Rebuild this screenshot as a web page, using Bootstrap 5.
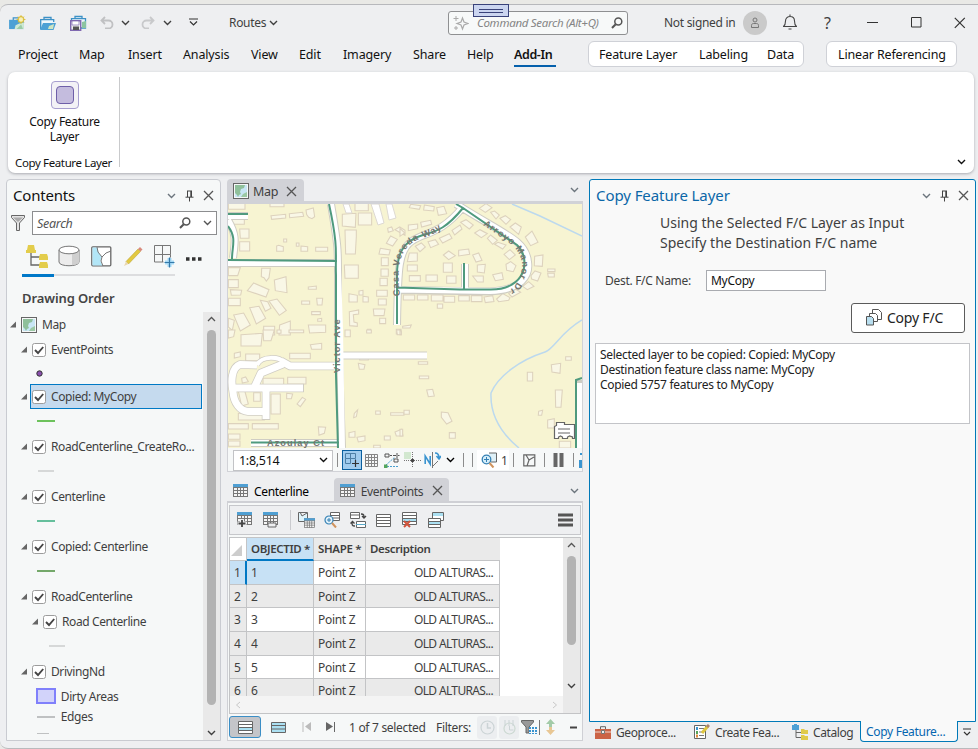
<!DOCTYPE html>
<html lang="en">
<head>
<meta charset="utf-8">
<title>Routes</title>
<link href="https://cdn.jsdelivr.net/npm/bootstrap@5.3.0/dist/css/bootstrap.min.css" rel="stylesheet">
<style>
body{width:978px;height:749px;overflow:hidden;background:#e9e9e6;font-family:"Noto Sans","Open Sans",sans-serif;font-size:12px;line-height:15px;color:#3f3f3f;letter-spacing:-.3px;white-space:nowrap}
svg{display:block;flex:none}
.app-window{height:745px;background:#eeeff1;border-top:1px solid #b7b8bc;border-bottom:1px solid #b9babd;border-radius:8px 0 0 8px;margin-top:4px}
.title-row{height:35px;display:grid;align-items:center;grid-template-columns:31px 30px 30px 21px 20px 22px 26px 40px 40px 179px 216px 79px 40px 41px 43px 44px 43px auto;padding-left:9px}
.cmd-search{width:180px;height:24px;background:#f7f9f9;border:1px solid #8f9092;border-radius:3px;color:#858585;font-style:italic;font-size:11.5px}
.cmd-search span{margin-top:-1px}
.drag-tab{position:absolute;left:473px;top:4px;width:36px;height:13px;background:#cbd5f0;border:1px solid #39427a}
.drag-tab i{display:block;width:24px;height:4px;margin:3.5px auto;border-top:1px solid #39427a;border-bottom:1px solid #39427a}
.avatar{width:24px;height:24px;background:#cacaca}
.menu-row{height:32px;display:grid;align-items:center;grid-template-columns:61px 49px 55px 68px 48px 44px 70px 54px 47px 74px 238px auto;padding:0 0 3px 18px;font-size:12.5px;color:#111;letter-spacing:-.15px}
.menu-row .menu-on{font-weight:600;height:22px;margin-top:2px;padding-top:2px;border-bottom:2px solid #0560ac;width:42px;letter-spacing:-.4px}
.ctx{height:26px;border:1px solid #cfd1d7;border-radius:6px;background:#fff;margin-top:-1px}
.ctx-a{width:216px;display:grid;grid-template-columns:100px 68px auto;align-items:center;padding-left:10px}
.ctx-b{width:131px;padding-left:11px}
.ribbon{height:101px;margin:0 4px 0 8px;background:#fff;border-radius:7px;box-shadow:0 1px 3px #a9abb0;color:#111}
.ribbon-group{width:112px;height:90px;margin-top:5px;border-right:1px solid #c9cacc;padding:4px 0 0 2px}
.ribbon-btn{width:28px;height:28px;border:1px solid #a79fcf;border-radius:4px;background:#f3f2f6;padding:4px}
.ribbon-btn i{display:block;width:18px;height:18px;border:1px solid #6e5fa8;border-radius:4px;background:#c4bcde}
.ribbon-cap{margin:5px 0 0}
.group-cap{font-size:11.5px;letter-spacing:-.37px;margin:auto 2px -3px 0}
.work{margin:6px 0 0 6px;height:562px;display:grid;gap:6px;grid-template-columns:215px 356px 387px;align-items:start}
.contents{height:562px;background:#f6f8f8;border:1px solid #c9cbd1;border-radius:4px 4px 0 0}
.pane-head{height:31px;font-size:15px;color:#111;letter-spacing:-.2px;display:grid;align-items:center}
.ch{grid-template-columns:154px 18px 18px auto;padding-left:6px}
.search-box{height:24px;width:185px;background:#fff;border:1px solid #8c8d8f;font-style:italic;color:#555;font-size:12.5px;margin-right:3px}
.view-icons{display:grid;grid-template-columns:32px 33px 32px 31px 32px auto;padding-left:19px;height:30px;align-items:center;margin-top:6px}
.view-line{margin-left:15px;width:153px;height:2px;background:#dcdddf;margin-top:3px}
.view-line i{display:block;width:32px;height:3px;background:#0078c8}
.order{font-size:13px;font-weight:600;letter-spacing:-.1px;padding:15px 0 0 15px;height:36px;color:#444}
.tree-wrap{height:428px;overflow:hidden}
.tree{width:196px;font-size:12px;letter-spacing:-.4px}
.tree>div{height:25px;display:flex;align-items:center;padding-left:13px}
.tree>.top-node{padding-left:2px}
.tree>.pad2{padding-left:24px}
.tree svg.arr{width:8px;height:7px;margin:0 4px 0 0}
.tree .nm{margin-left:5px}
.tree>.selrow svg.arr{margin-right:2px}
.tree .sel{background:#c5daee;box-shadow:inset 0 0 0 1px #0079c5;padding-left:2px;width:172px;height:25px;display:flex;align-items:center}
.tree>.sym{padding:0 0 2px 30px}
.tree>.pt-sym{height:22px;padding:0 0 0 29px}
.tree>.area-row{height:24px;padding-left:29px}
.tree>.edge-row{height:17px;padding:0 0 0 30px}
.tree>.sub-sym{padding:0 0 2px 42px}
.ln{display:block;width:18px;height:2px}
.ln-short{width:16px;margin-left:1px}
.ln-cut{width:12px;height:1px}
.s1{background:#6dc25c}.s2{background:#d6d8d8}.s3{background:#65bf9c}.s4{background:#74a86a}.s5{background:#bfc1c2}
.vscroll{background:#e9e9e9;width:17px}
.thumb{display:block;background:#b3b3b3;border-radius:5px;width:9px;margin:0 4px}
.th-tree{height:375px}.th-tbl{height:89px}
.mid{width:356px}
.tab-on{background:#d1d2d7;border-radius:4px 4px 0 0}
.map-tab{width:77px;height:22px;padding:2px 0 0 6px;font-size:12.5px}
.map-panel{border:1px solid #d1d2d7;border-top:3px solid #d1d2d7;height:271px;background:#f6f8f8;overflow:hidden}
.map-bar{height:24px;padding-left:5px}
.scale-box{width:100px;height:21px;background:#fff;border:1px solid #c2c3c6;color:#111;padding:0 4px 0 5px;font-size:12.5px;flex:none}
.tb-sep{width:1px;height:14px;background:#8c8c8c}
.map-tools{display:grid;flex:none;grid-template-columns:5px 23px 19px 20px 20px 22px 17px 9px 5px 36px 10px 21px 9px 20px 6px 3px;align-items:center;padding-left:4px}
.snap{width:20px;height:20px;background:#a0ccee;border:1px solid #0a5f9e}
.zoom-chip{width:32px;height:20px;background:#fff}
.tbl-tabs{margin-top:6px;height:23px;padding-left:6px}
.tab-c{margin-left:6px;letter-spacing:-.35px;padding-top:3px}
.tbl-tabs svg{margin-top:2px}
.tbl-tabs .tab-on{width:115px;padding-left:6px;height:23px;margin-left:25px}
.tbl-tabs .tab-on span{margin-left:6px;margin-right:9px;letter-spacing:-.35px;padding-top:3px}
.tbl-panel{border:1px solid #cfd0d5;border-top:2px solid #cfd0d5;height:240px;background:#f6f8f8;padding:2px 1px 0}
.tbl-tools{height:30px;border:1px solid #c6c7cb;background:#eeeff1;display:grid;align-items:center;grid-template-columns:26px 27px 8px 26px 26px 26px 26px 26px 130px auto;padding-left:7px}
.tool-sep{width:1px;height:20px;background:#cacbcf}
.grid-box{border:1px solid #c3c4c6;margin-top:2px;height:177px;background:#fff;overflow:hidden}
.attr{display:grid;grid-template-columns:17px 67px 52px 134px;grid-template-rows:23px 24px 23px 24px 24px 23px 24px;height:158px;overflow:hidden;width:270px}
.attr>div{border-right:1px solid #c3c4c6;border-bottom:1px solid #c3c4c6;padding:4px 4px 0;overflow:hidden}
.attr .alt,.attr .hd{background:#eaeaea}
.attr .hd{font-weight:600;font-size:11.5px;letter-spacing:-.35px;padding-top:3px}
.attr .rn{background:#eaeaea}
.attr .blue{background:#c7e1f5}
.attr .hblue{background:#c7e1f5;border-bottom:2px solid #0078c4}
.attr .rblue{background:#c7e1f5;border-right:2px solid #0078c4}
.attr .ds{padding-left:48px;letter-spacing:-.65px}
.hscroll{height:17px;background:#f4f4f4;width:333px;padding:0 5px}
.tbl-foot{height:26px;display:grid;align-items:center;grid-template-columns:42px 31px 23px 24px 87px 41px 22px 22px 25px 24px auto}
.foot-on{width:32px;height:22px;background:#c4c5c9;border:1px solid #3a8ec6;border-radius:3px}
.dim{background:#eceef0;width:20px;height:23px;border-radius:3px;display:flex;align-items:center;justify-content:center}
.right-pane{width:387px;height:543px;background:#f9f9f9;border:1px solid #0079b8;border-radius:3px 3px 0 0}
.rh{grid-template-columns:326px 18px 18px auto;padding-left:6px;color:#0b67a8;letter-spacing:-.08px}
.intro{font-size:14px;line-height:20px;letter-spacing:0;padding:2px 0 0 70px}
.name-input{width:120px;height:21px;border:1px solid #a9abb0;background:#fff;color:#111;padding:2px 4px}
.dest{display:grid;grid-template-columns:101px auto;padding-left:15px;align-items:center;margin-top:17px}
.copy-btn{width:114px;height:30px;border:1px solid #5b5b5b;border-radius:3px;background:#fff;margin:12px 0 0 261px;font-size:14px;color:#222;letter-spacing:-.2px;padding:0 7px 1px 0}
.log{margin:10px 0 0 5px;width:375px;height:81px;border:1px solid #c3c4c8;background:#fff;padding:3px 4px;color:#222;letter-spacing:-.31px}
.dock{display:grid;grid-template-columns:99px 98px 67px 100px auto;padding-left:6px;height:20px;letter-spacing:-.4px}
.dock>div{display:flex;align-items:center;gap:5px}
.dock .dock-on{border:1px solid #0079b8;border-top:0;border-radius:0 0 4px 4px;background:#f9f9f9;color:#0566b0;margin:-1px 0 0 1px;width:98px;padding-left:5px;height:21px;letter-spacing:-.3px}
.bl path{fill:#f9f7e6;stroke:#ddd2bd;stroke-width:3.2}
.rd{fill:none;stroke:#fff}
.rc{fill:none;stroke:#cfcdc4}
.gr{fill:none;stroke:#4f9a7e;stroke-width:2}
.wt{fill:none;stroke:#bcd9ee;stroke-width:1.5}
.st{font:700 9.2px "Liberation Sans",sans-serif;fill:#75756e;letter-spacing:1px}
</style>
<script src="https://cdn.jsdelivr.net/npm/bootstrap@5.3.0/dist/js/bootstrap.bundle.min.js"></script>
</head>
<body>
<svg width="0" height="0" class="position-absolute">
<defs>
<symbol id="chev" viewBox="0 0 9 6"><path d="M1 1l3.500 3.500L8 1" fill="none" stroke="currentColor" stroke-width="1.400"/></symbol>
<symbol id="pin" viewBox="0 0 9 12"><path d="M2.500 1v6M6.500 1v6M2 1h5M.5 7.200h8M4.500 7v4.500M5.800 1v6" fill="none" stroke="#444" stroke-width="1"/></symbol>
<symbol id="xx" viewBox="0 0 11 11"><path d="M1 1l9 9M10 1l-9 9" fill="none" stroke="#555" stroke-width="1.300"/></symbol>
<symbol id="mag" viewBox="0 0 12 12"><circle cx="7.300" cy="4.500" r="3.500" fill="none" stroke="#555" stroke-width="1.500"/><path d="M4.700 7.200L1 11" stroke="#555" stroke-width="2"/></symbol>
<symbol id="chk" viewBox="0 0 14 14"><rect x=".5" y=".5" width="13" height="13" rx="2" fill="#fff" stroke="#9c9c9c"/><path d="M3 7l3 3 5.200-6" fill="none" stroke="#444" stroke-width="1.900"/></symbol>
<symbol id="arr" viewBox="0 0 8 7"><path d="M7 .500v6H1z" fill="#666"/></symbol>
<symbol id="mapi" viewBox="0 0 16 16"><rect x=".5" y=".5" width="15" height="15" fill="#f6f8f8" stroke="#666"/><rect x="2" y="2" width="12" height="12" fill="#c8e6f5"/><path d="M2 2h10l-1 3-3 1-1 3 1 2-2 1-1 2-1-2-2-2z" fill="#8fc09b"/><path d="M14 9v5H8l2-3z" fill="#9cc9a5"/></symbol>
<symbol id="tbl" viewBox="0 0 15 13"><rect x=".5" y=".5" width="14" height="12" fill="#f5f5f5" stroke="#777"/><rect x="0" y="0" width="15" height="3.500" fill="#4f9fd3"/><path d="M0 3.500h15M0 6.500h15M0 9.500h15M4.500 4v9M7.500 4v9M10.500 4v9" stroke="#777"/></symbol>
<symbol id="rows" viewBox="0 0 15 13"><path d="M.5.500h14v12H.5zM0 3.500h15M0 6.500h15M0 9.500h15" fill="#fff" stroke="#666"/></symbol>
<symbol id="brief" viewBox="0 0 16 14"><path d="M4.500 4V1h7v3" fill="none" stroke="#3d91c6" stroke-width="1.300"/><path d="M0 3h16v10H0z" fill="#4ca0d5"/><path d="M6 13l1-4 4-2 5-1v7z" fill="#cfe9d4"/><path d="M8 13l5-5 2 5z" fill="#9bcba6"/></symbol>
</defs></svg>

<main class="app-window">
<header class="title-row">
 <svg width="17" height="16"><use href="#brief" x="0" y="2" width="15" height="13"/><circle cx="12" cy="4.500" r="3" fill="#f6ecae" stroke="#d9bb35"/><path d="M12 0v9M7.500 4.500h9M9 1.500l6 6M15 1.500l-6 6" stroke="#d9bb35" stroke-width=".8"/><circle cx="12" cy="4.500" r="2" fill="#f8f0b8"/></svg>
 <svg width="16" height="14"><path d="M4 4V1.500h7V4" fill="none" stroke="#3d91c6" stroke-width="1.300"/><path d="M.7 13V3.700h13V6" fill="#eef6fb" stroke="#3d91c6" stroke-width="1.300"/><path d="M0 14l3-7h13l-2.500 7z" fill="#4ca0d5"/><path d="M8 13l1-3 5-2-1 5z" fill="#cfe5c2"/></svg>
 <svg width="17" height="16"><path d="M5 4V1.500h7V4M1.500 6V3.700h14V13H11" fill="#eef6fb" stroke="#3d91c6" stroke-width="1.300"/><path d="M12 13V7l4-1v7z" fill="#8cc4a0"/><path d="M.7 5.700h10v9.600h-10z" fill="#eee" stroke="#8069b1" stroke-width="1.400"/><path d="M2 6h7v4H2z" fill="#fff" stroke="#8069b1" stroke-width=".7"/><path d="M3 11.500h6V15H3z" fill="#555"/></svg>
 <svg width="14" height="13"><path d="M5 1L1.500 4.500 5 8M1.500 4.500H8.500a4 4 0 0 1 0 8H5" fill="none" stroke="#c0c1c3" stroke-width="1.800"/></svg>
 <svg width="9" height="6"><use href="#chev"/></svg>
 <svg width="14" height="13"><path d="M9 1l3.500 3.500L9 8M12.500 4.500H5.500a4 4 0 0 0 0 8H8" fill="none" stroke="#c8c9cb" stroke-width="1.800"/></svg>
 <svg width="9" height="6"><use href="#chev"/></svg>
 <svg width="9" height="9"><path d="M0 1h9M1 3.500L4.500 7 8 3.500" fill="none" stroke="#333" stroke-width="1.200"/></svg>
 <span>Routes</span>
 <svg width="9" height="6"><use href="#chev"/></svg>
 <div class="cmd-search d-flex align-items-center"><svg width="16" height="16" class="ms-1 me-2" viewBox="0 0 16 16"><path d="M9.500 3l1.500 4 4 1.500-4 1.500-1.500 4L8 10 4 8.500 8 7z" fill="none" stroke="#aaa" stroke-width="1.200"/><path d="M3 1v5M.5 3.500h5M3 11v4M1 13h4" stroke="#aaa"/></svg><span class="flex-fill">Command Search (Alt+Q)</span><svg width="12" height="12" class="me-1 pe-0"><use href="#mag"/></svg></div>
 <span>Not signed in</span>
 <span class="avatar rounded-circle d-flex justify-content-center align-items-center"><svg width="10" height="12"><circle cx="5" cy="3" r="2" fill="none" stroke="#777"/><path d="M1.500 10.500V8.500c0-1.500 1-2 2-2h3c1 0 2 .5 2 2v2z" fill="none" stroke="#777"/></svg></span>
 <svg width="14" height="17"><path d="M.5 12.500C2.500 11 2.500 9.500 2.500 7c0-6 9-6 9 0 0 2.500 0 4 2 5.500zM5.500 15h3M7 .500v2" fill="none" stroke="#444" stroke-width="1.100"/></svg>
 <span class="fs-6 lh-1">?</span>
 <svg width="11" height="2"><path d="M0 .500h11" stroke="#333"/></svg>
 <svg width="11" height="11"><path d="M.5.500h9.500v9.500H.5z" fill="none" stroke="#333"/></svg>
 <svg width="12" height="12"><path d="M.8.800l10 10M10.800.800l-10 10" stroke="#333" stroke-width="1.200"/></svg>
</header>
<div class="drag-tab"><i></i></div>
<nav class="menu-row">
 <span>Project</span><span>Map</span><span>Insert</span><span>Analysis</span><span>View</span><span>Edit</span><span>Imagery</span><span>Share</span><span>Help</span><span class="menu-on">Add-In</span>
 <div class="ctx ctx-a"><span>Feature Layer</span><span>Labeling</span><span>Data</span></div>
 <div class="ctx ctx-b d-flex align-items-center">Linear Referencing</div>
</nav>
<section class="ribbon d-flex justify-content-between">
 <div class="ribbon-group text-center d-flex flex-column align-items-center"><span class="ribbon-btn"><i></i></span><span class="ribbon-cap">Copy Feature<br>Layer</span><span class="group-cap">Copy Feature Layer</span></div>
 <svg width="9" height="6" class="align-self-end mb-2 me-2 pb-0"><use href="#chev"/></svg>
</section>

<div class="work">
<aside class="contents">
 <div class="pane-head ch"><span>Contents</span><svg width="9" height="6" class="text-secondary"><use href="#chev"/></svg><svg width="9" height="12"><use href="#pin"/></svg><svg width="11" height="11"><use href="#xx"/></svg></div>
 <div class="d-flex align-items-center ps-1"><svg width="14" height="16" viewBox="0 0 14 16"><path d="M.5.500h13v2L8.500 8v7.500h-3V8L.5 2.500z" fill="#e3e3e3" stroke="#666"/><path d="M2 2.500h10L7 7z" fill="#aaa"/></svg>
 <div class="search-box d-flex align-items-center ms-auto"><span class="flex-fill ps-1">Search</span><svg width="12" height="12" class="me-2"><use href="#mag"/></svg><svg width="9" height="6" class="mx-1"><use href="#chev"/></svg></div></div>
 <div class="view-icons">
  <svg width="23" height="23"><path d="M5 8v12h9M5 12h9" fill="none" stroke="#666" stroke-width="1.300"/><g fill="#e3cd4c"><path d="M2 0h6l1 5H1zM0 5h10v3H0zM14 9h7l1 3v3H13v-3zM14 17h7l1 3v3H13v-3z"/></g></svg>
  <svg width="22" height="22"><path d="M1 5v12c0 5 20 5 20 0V5" fill="#ececec" stroke="#777"/><path d="M14 8v12c4 0 7-1 7-3V5z" fill="#cfcfcf"/><ellipse cx="11" cy="5" rx="10" ry="3.800" fill="#fff" stroke="#777"/></svg>
  <svg width="21" height="21"><rect x=".8" y=".8" width="19" height="19" rx="1" fill="#fff" stroke="#666" stroke-width="1.300"/><path d="M1.500 1.500h5l1 5 3 4-1 5 2 4H1.500z" fill="#b2e6f7"/><path d="M6 1l1 5 4 5-1 4 2 5M11 11l4-4 5-2" fill="none" stroke="#777"/></svg>
  <svg width="20" height="21"><path d="M3 15.500L15 3l2.500 2.500L5.500 18z" fill="#e2c941" stroke="#b59d28" stroke-width=".5"/><path d="M15 3l2-2 2.500 2.500-2 2z" fill="#d98b7e"/><path d="M3 15.500L1 20l4.500-2z" fill="#ead8b0"/></svg>
  <svg width="21" height="23"><path d="M.5.500h16v9H.5zM8.500.500V17M.5 9.500V17h9M16.500 9.500v3" fill="none" stroke="#777"/><path d="M15.500 13v9M11 17.500h9" stroke="#a5d9f5" stroke-width="4"/><path d="M15.500 12.500v10M10.500 17.500h10" stroke="#3478a8" stroke-width="1.200"/></svg>
  <svg width="16" height="10"><path d="M0 8h3.500M6 8h3.500M12 8h3.500" stroke="#333" stroke-width="3.500"/></svg>
 </div>
 <div class="view-line"><i></i></div>
 <div class="order">Drawing Order</div>
 <div class="tree-wrap d-flex">
 <div class="tree">
  <div class="top-node"><svg class="arr"><use href="#arr"/></svg><svg width="16" height="16"><use href="#mapi"/></svg><span class="nm">Map</span></div>
  <div><svg class="arr"><use href="#arr"/></svg><svg width="14" height="14"><use href="#chk"/></svg><span class="nm">EventPoints</span></div>
  <div class="pt-sym"><svg width="7" height="7"><circle cx="3.500" cy="3.500" r="2.700" fill="#8a50ad" stroke="#333"/></svg></div>
  <div class="selrow"><svg class="arr"><use href="#arr"/></svg><span class="sel"><svg width="14" height="14"><use href="#chk"/></svg><span class="nm">Copied: MyCopy</span></span></div>
  <div class="sym"><i class="ln s1"></i></div>
  <div><svg class="arr"><use href="#arr"/></svg><svg width="14" height="14"><use href="#chk"/></svg><span class="nm">RoadCenterline_CreateRo...</span></div>
  <div class="sym"><i class="ln ln-short s2"></i></div>
  <div><svg class="arr"><use href="#arr"/></svg><svg width="14" height="14"><use href="#chk"/></svg><span class="nm">Centerline</span></div>
  <div class="sym"><i class="ln s3"></i></div>
  <div><svg class="arr"><use href="#arr"/></svg><svg width="14" height="14"><use href="#chk"/></svg><span class="nm">Copied: Centerline</span></div>
  <div class="sym"><i class="ln s4"></i></div>
  <div><svg class="arr"><use href="#arr"/></svg><svg width="14" height="14"><use href="#chk"/></svg><span class="nm">RoadCenterline</span></div>
  <div class="pad2"><svg class="arr"><use href="#arr"/></svg><svg width="14" height="14"><use href="#chk"/></svg><span class="nm">Road Centerline</span></div>
  <div class="sub-sym"><i class="ln ln-short s2 ms-0"></i></div>
  <div><svg class="arr"><use href="#arr"/></svg><svg width="14" height="14"><use href="#chk"/></svg><span class="nm">DrivingNd</span></div>
  <div class="area-row"><svg width="20" height="16"><rect x="1" y="1" width="18" height="14" fill="#d2d3fa" stroke="#8080fb" stroke-width="2"/></svg><span class="nm ps-0 ms-1">&#8202;Dirty Areas</span></div>
  <div class="sym edge-row"><i class="ln s5"></i><span class="nm ps-0">&#8202;Edges</span></div>
  <div class="sym edge-row"><i class="ln ln-cut s5"></i></div>
 </div>
 <div class="vscroll d-flex flex-column"><svg width="9" height="6" class="mx-auto my-1"><path d="M1 5l3.500-3.500L8 5" fill="none" stroke="#555" stroke-width="1.300"/></svg><i class="thumb th-tree mt-1"></i><svg width="9" height="6" class="mx-auto mt-auto mb-1"><use href="#chev"/></svg></div>
 </div>
</aside>

<section class="mid">
 <div class="d-flex justify-content-between align-items-center"><div class="tab-on map-tab d-flex align-items-center"><svg width="16" height="16" class="me-1"><use href="#mapi"/></svg><span>Map</span><svg width="11" height="11" class="ms-2"><use href="#xx"/></svg></div><svg width="9" height="6" class="me-1 text-secondary"><use href="#chev"/></svg></div>
 <div class="map-panel">
 <svg width="354" height="244" viewBox="228 204 354 244">
 <rect x="228" y="204" width="354" height="244" fill="#f7f4d2"/>
 <g class="wt"><path d="M512 204L540 216 582 236"/><path d="M582 320C560 333 554 349 545 352C520 360 498 376 491 393C490 416 502 434 519 448"/></g>
 <g class="bl">
 <g transform="translate(225 175) scale(.3333)">
 <path d="M10 85h50v18H10zM20 130h38v18H20zM135 85h42v10h-42zM138 122l44-4v11l-42 4zM193 116l40-4 3 12-42 4zM243 105l22-6 4 26-8 6-10-4-6-8zM44 162h28v28H46zM44 200h30v28H44zM155 213l6-2 14 4v14h-20zM228 213l20 2v14h-20zM214 204h8v10h-8zM176 192h9v9h-9zM272 217h36v12h-36zM10 278h36l-8 24H10zM10 314h30v24H10zM16 344l34 2-3 14-28 1zM10 370h36v22H10zM110 280h26l-4 28-8 10-7-10-8-3zM86 324l46 20-9 22-56-19zM148 315l35-10 3 48-35-6zM74 398l28-4 20 36-28 17zM106 376l22 4 10 20-17 9zM132 378l24-6 28 34-21 15zM26 420l30-6 20 36-30 18zM10 430l18 6-6 30-12-10zM164 450l32-12v42h-34zM116 454h33v26h-33zM250 450h52v22l-48 2zM250 336l24-3v10h-24zM275 370h18l-2 20h-14zM230 378h24v10h-24zM260 410h26v9h-26zM278 432l12-2v9h-12z"/>
 <path d="M352 118l41-3-2 42-39-4zM400 114h40v36h-40zM390 85h40v22h-40zM360 165h34v20l-3 52h-29zM358 270h42v40h-40zM372 356l25 5v20h-25zM402 348l12-2v14h-12zM414 364l16 2v15h-16zM373 410l28-5v12l-16 2 2 22 10 3v10l-23-2zM428 463h9v9h-9zM488 160l12-4 5 11-15 5zM510 164l14-8 16 10v15zM484 205l13-22 20 10-14 20zM466 220l30 5-4 15-30-3zM469 248h21v24h-21zM468 282h22v22h-22zM465 310h22v22h-22zM455 346h32v18h-32zM460 372h24v18h-24zM445 402h35l-3 20h-30zM464 430h18v16h-18zM514 463h14v14h-14z"/>
 </g>
 <g transform="translate(400 175) scale(.3333)">
 <path d="M32 88l30 4-4 11-30-5zM73 90l30 5-2 13-30-3zM110 98l22-4 8 22-25 5zM62 142l30-6 3 12-30 8zM25 150l28-3v14l-28 6zM0 160l14 14-14 10zM156 166l24-16 6 12-22 18zM118 190l30-14 8 14-28 14zM182 142l16-8 22 16-12 12zM46 214l18-10 12 12-16 14zM84 200l22-6 10 14-24 10zM28 234h24v24l-30 2zM130 240l16-12 20 14-20 12zM176 226l30-4 3 16-33 5zM218 240l18-6 10 22-18 5zM130 264h27v28h-27zM232 270l24-2-3 26-21-3zM22 270h30v18H22zM28 302h33v17H28zM78 300h34v19H78zM140 303h28v22h-28zM218 303h32v18h-18zM278 299l28-6 4 20-24 4zM318 268l14-8 16 12-8 18-20-4zM312 238l18-14 16 16-18 14zM224 174l16-10 22 12-18 12zM262 190l10-10 20 16-14 12zM284 208l10-6 24 8-10 12zM238 100l20-14 18 12-20 14zM272 112l12-4 14 12-10 12zM300 130l16-8 16 12-14 14zM330 156l16-12 18 12-8 22zM376 186l20-18 18 34-22 10zM404 244l25-4-2 34-24-2zM393 302l12-14 18 6-10 24-18-6zM368 334l18-14 16 14-20 10zM326 356l20-14 16 10-26 14zM290 372l18-16 22 12-4 8-30 4zM443 282h22v8h-22zM443 295h20v11h-18zM10 360h34v15H10zM52 360h32v15H52zM94 360h35v18H94zM132 364h32v18h-32zM176 362h32v16h-32zM214 362h32v18h-32zM252 366l26-4 4 18-26 3zM112 387h16v13h-16zM8 454l26-4-4 9H8z"/>
 </g>
 <g transform="translate(225 330) scale(.3333)">
 <path d="M10 0h20l-4 20-16 4zM48 14l64-4-4 38H48zM114 0h34l-10 32h-22zM156 0h12v10h-12zM192 0h44v8h-44zM256 44l34-4v18h-30zM194 70h62v16h-62zM28 70l18-4v14l-18 4zM62 72h42v20H62zM114 145h62v24h-62zM188 142h55v20h-55zM50 145l12-4 8 14-18 4zM86 188h20v26H86zM37 170l20 4 13 48-20 6zM138 192h28v60h-28zM185 190l18 2-4 14h-14zM216 222l16-20 10 6-16 22zM40 250h78v20H40zM10 281h60v16H10zM82 281h78v16H82zM10 312h35v16H10zM10 333h35v16H10zM280 290l22 2-4 18-16 6z"/>
 <path d="M360 0h16v20h-16zM425 0h14v9h-14zM515 0h12l2 14h-12zM404 84h26v6h-26zM400 100l20 4-3 14h-14zM388 250l10-10-4 20-8 3zM452 243h14v10h-14zM497 248h40v8h-40zM372 308l18-4v18h-18zM396 322l24-4v14l-20 4zM478 318h18v12h-18zM510 306l20-8 4 20h-20zM446 346h20v8h-20z"/>
 </g>
 <g transform="translate(400 330) scale(.3333)">
 <path d="M55 95h28v8H55zM58 138h28v8H58zM80 180l18-2 5 20-18 2zM12 241h16v12H12zM0 298h8v20H0zM124 246l20 2 12 26-16 8-16-20zM148 308h18v17h-18zM454 104l28-4-2 30-24-4zM497 80h17v11h-17zM382 127h16v26h-16zM466 180h21l-4 52h-16zM416 244l12-3-3 15h-10zM443 270l20-4v28h-20zM478 334h34v20h-34zM0 0l4 4v10h-4z"/>
 </g>
 </g>
 <g class="rc" stroke-width="8"><path d="M228 263H336M331 204C338 245 338 250 338 270L338 330 342 448M228 216H248M228 220C237 235 235 242 233 258M463 207C440 235 425 232 412 241C398 250 398 270 397 325M398 290L490 291.500C522 290 530 275 528 262C526 240 505 235 456 204M465 264V288M341 355.500H427M251 443H340M580 380V448"/></g>
 <g class="rd" stroke-width="6"><path d="M228 263H336"/><path d="M331 204C338 245 338 250 338 270L340 330 342 448"/><path d="M228 216H248M228 220C237 235 235 242 233 258M463 207C440 235 425 232 412 241C398 250 398 270 397 325M398 289.500L490 291C522 290 530 275 528 262C526 240 505 235 456 204M465 264V288M341 355.500H427M251 443H340M580 383V448"/></g>
 <g fill="none" stroke="#d0cdc4" stroke-width="8.500" stroke-linejoin="round"><path d="M340 366H290L281 361M257 365L240 364.500C231 368 231 382 233 392C234 403 240 411 248 411.500H268M230 388H304M266 388V420M254 388L261 373 283 364"/><path d="M257 365C262 355 280 357 283 362" stroke-width="5.500"/></g>
 <g class="rd" stroke-width="7" stroke-linejoin="round"><path d="M340 366H290L281 361M257 365L240 364.500C231 368 231 382 233 392C234 403 240 411 248 411.500H268M231 388H303M266 388V419M254 388L261 373 283 364"/><path d="M257 365C262 355 280 357 283 362" stroke-width="4"/></g>
 <g fill="#fff" stroke="#ddd9d2"><path d="M343 204h6l3 9h-6zM371 204h8l5 19-6 2zM386 204h6l4 14-7 2z"/></g>
 <g class="gr"><path d="M228 214H248M228 226C237 238 232 246 232 259M228 260L337 261M329 204C339 250 335 255 336 275V375L338 448M251 442.500H339M456 204L463 208C445 230 436 231 423 235C402 241 397 255 397 275V324M463 208L517 245C531 258 527 290 490 289.500H460L397 287.500M464 263V289M576 448V380L582 378"/></g>
 <defs><path id="way" d="M400 296C395 258 403 243 426 237C437 233 445 227 451 221"/><path id="man" d="M483 225L508 242C525 255 526 270 514 287L500 296"/><path id="vic" d="M340 373V308"/></defs>
 <g class="st"><text><textPath href="#way">Casa Vereda Way</textPath></text><text><textPath href="#man">Arroyo Manor Dr</textPath></text><text><textPath href="#vic">Victor Ave</textPath></text><text x="267" y="446" textLength="58">Azoulay Ct</text></g>
 <path d="M554.500 438.500v-12l2-1v-3h8v2h10v14h-2v-1.500l-3-1-2 1v1.500h-5v-1.500l-2-1-2 1v1.500z" fill="#fff" stroke="#666" stroke-width="1.200"/><path d="M558 429h12M558 433h12" stroke="#666"/>
 </svg>
 <div class="map-bar d-flex align-items-center"><div class="scale-box d-flex justify-content-between align-items-center"><span>1:8,514</span><svg width="9" height="6"><use href="#chev"/></svg></div>
 <div class="map-tools"><i class="tb-sep"></i>
 <span class="snap"><svg width="18" height="18"><path d="M2.500 2.500h10v5h-10zM7.500 2.500v10M2.500 7.500v5h5M12.500 8v2" fill="none" stroke="#4d7fa5"/><path d="M12.500 9v7M9 12.500h7" stroke="#333" stroke-width="1.200"/></svg></span>
 <svg width="13" height="13"><path d="M.5.500h12v12H.5zM3.500.500v12M6.500.500v12M9.500.500v12M.5 3.500h12M.5 6.500h12M.5 9.500h12" fill="none" stroke="#858585"/></svg>
 <svg width="17" height="16"><path d="M1 2h4v3H1zM10 7h4v3h-4z" fill="none" stroke="#555"/><path d="M6 3.500h5M13 1v5M10.500 3.500h5" stroke="#555" stroke-dasharray="2 1"/><path d="M2 13l9-8" stroke="#4aa0cf" stroke-dasharray="2 1"/><path d="M3 14.500h12" stroke="#4aa0cf" stroke-dasharray="2 1"/><rect x="0" y="12.500" width="3.500" height="3.500" fill="#54a65d"/></svg>
 <svg width="17" height="16"><path d="M0 0h7v7H0z" fill="#d2e8d0"/><path d="M8.500 0v16M0 8.500h17" stroke="#777" stroke-dasharray="1 1"/><circle cx="8.500" cy="8.500" r="1.800" fill="#444"/></svg>
 <svg width="17" height="17"><path d="M1.200 12V4l5 8V4M11 1c3 0 4 2 4 5M12.500 4l2.500 3 2-3" fill="none" stroke="#3a94d0" stroke-width="1.600"/><path d="M8.500 0v16M8 15l6-6" stroke="#777"/></svg>
 <svg width="9" height="6" class="text-black"><use href="#chev"/></svg><i class="tb-sep"></i><i class="tb-sep"></i>
 <div class="zoom-chip d-flex align-items-center gap-1 ps-1"><svg width="16" height="16"><path d="M8 1h7.500v9H10" fill="#dff0f7" stroke="#666"/><circle cx="5.500" cy="7.500" r="4.300" fill="#d6eefa" stroke="#3580b4" stroke-width="1.300"/><path d="M5.500 5v5M3 7.500h5" stroke="#3580b4"/><path d="M8.500 11l4 4.500" stroke="#d0935d" stroke-width="2"/></svg><span>1</span></div>
 <i class="tb-sep"></i><svg width="13" height="13"><path d="M.8.800h11v11h-11zM3 1l3 5-2 6M6 6l5-3" fill="none" stroke="#666" stroke-width="1.200"/></svg><i class="tb-sep"></i>
 <svg width="12" height="14"><path d="M2.500 0v14M8.500 0v14" stroke="#666" stroke-width="4"/></svg><i class="tb-sep"></i><svg width="3" height="16"><path d="M1 1h2v2H1zM0 8h3v8H0z" fill="#3994d0"/></svg></div></div>
 </div>
 <div class="tbl-tabs d-flex align-items-center"><svg width="15" height="13"><use href="#tbl"/></svg><span class="tab-c text-black">Centerline</span><div class="tab-on d-flex align-items-center"><svg width="15" height="13"><use href="#tbl"/></svg><span>EventPoints</span><svg width="11" height="11"><use href="#xx"/></svg></div><svg width="9" height="6" class="ms-auto me-1 text-secondary"><use href="#chev"/></svg></div>
 <div class="tbl-panel">
 <div class="tbl-tools">
  <svg width="16" height="16"><use href="#tbl" width="15" height="13"/><path d="M5 7v9M.5 11.500h9" stroke="#eeeff1" stroke-width="4"/><path d="M5 8v7M1.500 11.500h7" stroke="#444" stroke-width="1.800"/></svg>
  <svg width="16" height="16"><use href="#tbl" width="15" height="13"/><path d="M5 11h8v4H5z" fill="#eeeff1" stroke="#666"/></svg>
  <i class="tool-sep"></i>
  <svg width="17" height="16"><path d="M.5.500h9v9h-9zM2 0l2 4 5-3" fill="#dff3fa" stroke="#666"/><use href="#tbl" x="6" y="6" width="11" height="10"/></svg>
  <svg width="17" height="16"><path d="M6.500.500h9v8h-9zM6 3.500h10M6 6h10" fill="#fff" stroke="#666"/><circle cx="5" cy="8" r="4" fill="#e3f2fa" stroke="#3580b4" stroke-width="1.200"/><path d="M5 6v4M3 8h4" stroke="#3580b4"/><path d="M8 11l4 4.500" stroke="#d0935d" stroke-width="2"/></svg>
  <svg width="17" height="16"><path d="M.5.500h9v6h-9zM0 3h10M6.500 9.500h9v6h-9z" fill="#fff" stroke="#666"/><path d="M6 12.500h10" stroke="#58a7c7"/><path d="M11 2c3 0 3 1 3 4M12 4l2 2 2-2M5 14c-3 0-3-1-3-4M.5 11.500l2-2 2 2" fill="none" stroke="#444" stroke-width="1.300"/></svg>
  <svg width="15" height="13"><use href="#rows"/></svg>
  <svg width="16" height="16"><path d="M.5.500h14v12H.5z" fill="#fff" stroke="#666"/><path d="M1 7h13v3H1z" fill="#abe0f2"/><path d="M0 3.500h15M0 6.500h15M0 9.500h15" stroke="#666"/><path d="M2 9l6 6M8 9l-6 6" stroke="#d0533b" stroke-width="2"/></svg>
  <svg width="17" height="16"><path d="M4.500.500h11v8h-11z" fill="#fff" stroke="#666"/><path d="M5 1h10v3H5z" fill="#abe0f2"/><path d="M.5 6.500h12v9H.5z" fill="#fff" stroke="#666"/><path d="M1 9h11v3H1z" fill="#abe0f2"/><path d="M0 9.500h12M0 12.500h12" stroke="#666"/></svg>
  <svg width="15" height="14" class="ms-auto me-2"><path d="M0 2h15M0 7h15M0 12h15" stroke="#555" stroke-width="2.800"/></svg>
 </div>
 <div class="grid-box d-flex"><div>
  <div class="attr">
  <div class="p-0 d-flex align-items-end justify-content-end"><svg width="11" height="11" class="mb-1 me-1"><path d="M11 0v11H0z" fill="#cdcdcd"/></svg></div><div class="hd hblue">OBJECTID *</div><div class="hd">SHAPE *</div><div class="hd border-end-0">Description</div>
  <div class="rn rblue">1</div><div class="blue">1</div><div>Point Z</div><div class="ds">OLD ALTURAS...</div>
  <div class="rn">2</div><div class="alt">2</div><div class="alt">Point Z</div><div class="alt ds">OLD ALTURAS...</div>
  <div class="rn">3</div><div>3</div><div>Point Z</div><div class="ds">OLD ALTURAS...</div>
  <div class="rn">4</div><div class="alt">4</div><div class="alt">Point Z</div><div class="alt ds">OLD ALTURAS...</div>
  <div class="rn">5</div><div>5</div><div>Point Z</div><div class="ds">OLD ALTURAS...</div>
  <div class="rn">6</div><div class="alt">6</div><div class="alt">Point Z</div><div class="alt ds">OLD ALTURAS...</div>
  </div>
  <div class="hscroll d-flex align-items-center justify-content-between"><svg width="6" height="8"><path d="M5 1L1.500 4 5 7" fill="none" stroke="#c8c8c8"/></svg><svg width="6" height="8"><path d="M1 1l3.500 3L1 7" fill="none" stroke="#c8c8c8"/></svg></div></div>
  <div class="vscroll d-flex flex-column"><svg width="9" height="6" class="mx-auto my-1"><path d="M1 5l3.500-3.500L8 5" fill="none" stroke="#555" stroke-width="1.300"/></svg><i class="thumb th-tbl mt-1"></i><svg width="9" height="6" class="mx-auto mt-auto mb-4"><use href="#chev"/></svg></div>
 </div>
 <div class="tbl-foot">
  <span class="foot-on d-flex align-items-center justify-content-center"><svg width="15" height="13"><use href="#rows"/><path d="M1 7h13v2H1z" fill="#abe0f2"/></svg></span>
  <svg width="15" height="11"><path d="M.5.500h14v10H.5z" fill="#abe0f2" stroke="#666"/><path d="M0 3.500h15M0 7h15" stroke="#666"/></svg>
  <svg width="11" height="10"><path d="M1 0v10" stroke="#bbb"/><path d="M9 0v9L3 4.500z" fill="#bbb"/></svg>
  <svg width="11" height="10"><path d="M9.500 0v10" stroke="#666"/><path d="M1 0v9l7-4.500z" fill="#666"/></svg>
  <span>1 of 7 selected</span><span>Filters:</span>
  <span class="dim"><svg width="15" height="15"><circle cx="7.500" cy="7.500" r="6.500" fill="none" stroke="#ccd4d6" stroke-width="1.200"/><path d="M7.500 3v5H11" fill="none" stroke="#ccd4d6" stroke-width="1.500"/></svg></span>
  <span class="dim"><svg width="15" height="15"><circle cx="7.500" cy="8.500" r="5.500" fill="none" stroke="#ccd9d2" stroke-width="1.200"/><path d="M3 0v6M7 0v6M11 0v6M7.500 6v4h4" fill="none" stroke="#ccd4d6"/></svg></span>
  <svg width="20" height="17"><path d="M.5 1.500h12v1.500L8 8v6H5V8L.5 3z" fill="#999" stroke="#666"/><path d="M8 8h9v8H8z" fill="#f6f8f8"/><path d="M9 8v7M12 8v7M15 8v7" stroke="#3994d0" stroke-width="2" stroke-dasharray="2 1"/><path d="M18.500 1v15" stroke="#777"/></svg>
  <svg width="9" height="16"><path d="M4.500 0L9 5H6v3H3V5H0z" fill="#a3cba8"/><path d="M4.500 16L0 11h3V8h3v3h3z" fill="#e8c794"/></svg>
  <svg width="7" height="3"><path d="M0 1.500h7" stroke="#444" stroke-width="2"/></svg>
 </div></div>
</section>

<section>
 <div class="right-pane">
 <div class="pane-head rh"><span>Copy Feature Layer</span><svg width="9" height="6" class="text-secondary"><use href="#chev"/></svg><svg width="9" height="12"><use href="#pin"/></svg><svg width="11" height="11"><use href="#xx"/></svg></div>
 <div class="intro">Using the Selected F/C Layer as Input<br>Specify the Destination F/C name</div>
 <div class="dest"><span>Dest. F/C Name:</span><div class="name-input">MyCopy</div></div>
 <div class="copy-btn d-flex align-items-center justify-content-center gap-1"><svg width="17" height="17"><path d="M6.500.500h6l3 3v7h-9z" fill="#fff" stroke="#555"/><path d="M3.500 4.500h6l2 2v6h-8z" fill="#fff" stroke="#555"/><path d="M.5 7.500h5l2 2v6.500h-7z" fill="#b9dff0" stroke="#555"/></svg><span>Copy F/C</span></div>
 <div class="log">Selected layer to be copied: Copied: MyCopy<br>Destination feature class name: MyCopy<br>Copied 5757 features to MyCopy</div>
 </div>
 <div class="dock">
 <div><svg width="16" height="13"><path d="M5.500 3V.700h5V3" fill="none" stroke="#666"/><path d="M0 3h16v10H0z" fill="#cb6346"/><path d="M0 6h16" stroke="#f0d9d0"/><path d="M6.500 4.500h3v3h-3z" fill="#eee" stroke="#777"/></svg><span>Geoproce...</span></div>
 <div><svg width="16" height="16"><path d="M.5 1.500h11v13H.5z" fill="#fff" stroke="#666"/><path d="M5 4.500h5M5 8h3M5 11.500h5" stroke="#777"/><path d="M2 3h2v3H2z" fill="#3994d0"/><path d="M2 7h2v3H2z" fill="#55a65b"/><path d="M2 10.500h2v3H2z" fill="#df8a3a"/><path d="M8 9l6-7" stroke="#dfc640" stroke-width="3"/><path d="M13 3l2-2" stroke="#a98370" stroke-width="3"/></svg><span>Create Fea...</span></div>
 <div><svg width="16" height="16"><path d="M4 5v8.500h6M4 8.500h6" fill="none" stroke="#666"/><path d="M2 0h3v1h-3zM0 1h7v5H0z" fill="#4ca0d5"/><path d="M9 5h3l1 1h3v4H9zM9 11h3l1 1h3v4H9z" fill="#e0ca48"/></svg><span>Catalog</span></div>
 <div class="dock-on">Copy Feature...</div>
 <div class="ps-1"><svg width="8" height="8"><path d="M0 1h8M1 4l3 3 3-3" fill="none" stroke="#333" stroke-width="1.200"/></svg></div>
 </div>
</section>
</div>
</main>
</body>
</html>
